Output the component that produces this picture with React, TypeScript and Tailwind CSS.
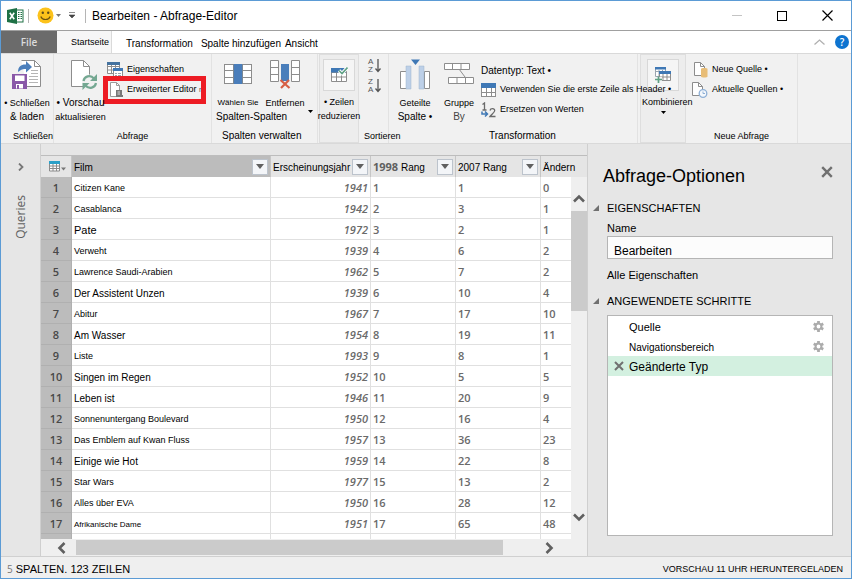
import React from "react";
import type { ReactNode } from "react";

const films: { title: string; size: string; year: number; r98: number; r07: number; diff: number }[] = [
  { title: "Citizen Kane", size: "text-[9px]", year: 1941, r98: 1, r07: 1, diff: 0 },
  { title: "Casablanca", size: "text-[9px]", year: 1942, r98: 2, r07: 3, diff: 1 },
  { title: "Pate", size: "text-[11px]", year: 1972, r98: 3, r07: 2, diff: 1 },
  { title: "Verweht", size: "text-[9px]", year: 1939, r98: 4, r07: 6, diff: 2 },
  { title: "Lawrence Saudi-Arabien", size: "text-[9px]", year: 1962, r98: 5, r07: 7, diff: 2 },
  { title: "Der Assistent Unzen", size: "text-[10px]", year: 1939, r98: 6, r07: 10, diff: 4 },
  { title: "Abitur", size: "text-[9px]", year: 1967, r98: 7, r07: 17, diff: 10 },
  { title: "Am Wasser", size: "text-[10px]", year: 1954, r98: 8, r07: 19, diff: 11 },
  { title: "Liste", size: "text-[9px]", year: 1993, r98: 9, r07: 8, diff: 1 },
  { title: "Singen im Regen", size: "text-[10px]", year: 1952, r98: 10, r07: 5, diff: 5 },
  { title: "Leben ist", size: "text-[10px]", year: 1946, r98: 11, r07: 20, diff: 9 },
  { title: "Sonnenuntergang Boulevard", size: "text-[9px]", year: 1950, r98: 12, r07: 16, diff: 4 },
  { title: "Das Emblem auf Kwan Fluss", size: "text-[9px]", year: 1957, r98: 13, r07: 36, diff: 23 },
  { title: "Einige wie Hot", size: "text-[10px]", year: 1959, r98: 14, r07: 22, diff: 8 },
  { title: "Star Wars", size: "text-[9px]", year: 1977, r98: 15, r07: 13, diff: 2 },
  { title: "Alles über EVA", size: "text-[9px]", year: 1950, r98: 16, r07: 28, diff: 12 },
  { title: "Afrikanische Dame", size: "text-[8px]", year: 1951, r98: 17, r07: 65, diff: 48 },
];

/* ---------- icons ---------- */

function ExcelIcon() {
  return (
    <svg width="17" height="16" viewBox="0 0 17 16">
      <rect x="9" y="2" width="7" height="12" fill="#fff" stroke="#1e7145" />
      <path d="M11 4.5h1.5M13.5 4.5H15M11 6.5h1.5M13.5 6.5H15M11 8.5h1.5M13.5 8.5H15M11 10.500h1.5M13.5 10.500H15" stroke="#1e7145" />
      <path d="M0 2 10 0v16L0 14z" fill="#1e7145" />
      <path d="M2.800 4.800 7.200 11.200M7.200 4.800 2.800 11.200" stroke="#fff" strokeWidth="1.600" />
    </svg>
  );
}

function SmileyIcon() {
  return (
    <svg width="17" height="17" viewBox="0 0 17 17">
      <circle cx="8.500" cy="8.500" r="8" fill="#fcc21b" />
      <circle cx="5.800" cy="5.800" r="1.200" fill="#5a4a1a" />
      <circle cx="11.200" cy="5.800" r="1.200" fill="#5a4a1a" />
      <path d="M3.800 9.500c1.500 4 7.900 4 9.400 0" fill="none" stroke="#6b5310" strokeWidth="1.200" />
    </svg>
  );
}

function Caret({ className = "" }: { className?: string }) {
  return (
    <svg className={className} width="5" height="3" viewBox="0 0 5 3">
      <path d="M0 0h5L2.500 3z" fill="currentColor" />
    </svg>
  );
}

function CloseLoadIcon() {
  return (
    <svg width="32" height="32" viewBox="0 0 32 32">
      <path d="M10.500 2.500h13l6 6v20h-14" fill="#fff" stroke="#8d8d8d" />
      <path d="M23.500 2.500v6h6" fill="none" stroke="#8d8d8d" />
      <path d="M20 12.500h7M20 15.500h7M18 18.500h9M18 21.500h9M18 24.500h9" stroke="#b5b5b5" />
      <path d="M7 14c0-6 4-8 8-7.500V3l6 6-6 5.500V11c-3-.5-5 .5-8 3z" fill="#4a7ebb" />
      <path d="M1 16h15v15H1z" fill="#8958a8" />
      <path d="M4 17.500h9.500V23H4zM5 26h7v4.500H5z" fill="#fff" />
      <path d="M6 27h2v4H6z" fill="#8958a8" />
    </svg>
  );
}

function RefreshPreviewIcon() {
  return (
    <svg width="32" height="32" viewBox="0 0 32 32">
      <path d="M6.500 2.500h12l6 6v20h-18z" fill="#fff" stroke="#8d8d8d" />
      <path d="M18.500 2.500v6h6" fill="none" stroke="#8d8d8d" />
      <circle cx="24.500" cy="24" r="7.500" fill="#f1f1f1" />
      <path d="M18.500 23c.8-5 7-6.500 10.500-2.500M31 25c-.8 5-7 6.500-10.500 2.500" fill="none" stroke="#74a892" strokeWidth="2.200" />
      <path d="M32 16v7h-7zM17.500 32v-7h7z" fill="#74a892" />
    </svg>
  );
}

function PropertiesIcon() {
  return (
    <svg className="shrink-0" width="16" height="16" viewBox="0 0 16 16">
      <path d="M.5.5h12v11H.5zM.5 4.500h12M.5 8h12M4.500 3v8.500M8.500 3v8.500" fill="#fff" stroke="#8d8d8d" />
      <path d="M0 0h13v3H0z" fill="#44729f" />
      <path d="M6.500 6.500h9v9h-9z" fill="#fff" stroke="#8d8d8d" />
      <path d="M6 6h10v3H6z" fill="#3f78b5" />
      <path d="M8 11.500h2M11 11.500h3M8 13.500h2M11 13.500h3" stroke="#9aa5b0" />
    </svg>
  );
}

function AdvancedEditorIcon() {
  return (
    <svg className="shrink-0" width="14" height="16" viewBox="0 0 14 16">
      <path d="M1.500.5h6l3 3v11h-9z" fill="#fff" stroke="#9a9a9a" />
      <path d="M7.500.5v3h3" fill="none" stroke="#9a9a9a" />
      <path d="M7 8h6v5h1v2H7z" fill="#777" />
      <path d="M8.500 10h2.500M8.500 12h2.500" stroke="#ddd" />
    </svg>
  );
}

function ChooseColumnsIcon() {
  return (
    <svg width="28" height="22" viewBox="0 0 28 22" shapeRendering="crispEdges">
      <path d="M.5 1.500h27v19H.5zM.5 7.500h27M.5 14.500h27" fill="#fff" stroke="#8d8d8d" />
      <path d="M10 1h8v20h-8z" fill="#4a7ebb" />
      <path d="M9.500 1v20M18.500 1v20" stroke="#7a8794" />
    </svg>
  );
}

function RemoveColumnsIcon() {
  return (
    <svg width="30" height="30" viewBox="0 0 30 30">
      <path d="M.5 1.500h8v21h-8zM.5 8.500h8M.5 15.500h8M21.500 1.500h8v21h-8zM21.500 8.500h8M21.500 15.500h8" fill="#fff" stroke="#8d8d8d" />
      <path d="M11 5h8v17h-8z" fill="#4a7ebb" />
      <path d="m10.500 21 9 8M19 21l-8 8" stroke="#d65f45" strokeWidth="2.200" />
    </svg>
  );
}

function KeepRowsIcon() {
  return (
    <svg width="18" height="16" viewBox="0 0 18 16">
      <path d="M1.500 1.500h15v13h-15zM1.500 5.500h15M1.500 10h15M6.500 5v9.500M11.500 5v9.500" fill="#fff" stroke="#8d8d8d" />
      <path d="M1 1h15v4.500H1z" fill="#3f78b5" />
      <path d="m9 3.500 3 3L17.500.5" fill="none" stroke="#fff" strokeWidth="3.500" />
      <path d="m9 3.500 3 3L17.500.5" fill="none" stroke="#5fa184" strokeWidth="1.600" />
    </svg>
  );
}

function SortIcon({ label }: { label: string }) {
  return (
    <span className="flex items-center gap-px text-[#555]">
      <span className="w-1.5 text-left text-[8px] leading-2 break-all">{label}</span>
      <svg width="6" height="14" viewBox="0 0 6 14">
        <path d="M3 0v12M.5 9.500 3 12.500 5.500 9.500" fill="none" stroke="currentColor" strokeWidth="1.300" />
      </svg>
    </span>
  );
}

function SplitColumnIcon() {
  return (
    <svg width="32" height="32" viewBox="0 0 32 32">
      <path d="M1.500 13.500h6v17h-6zM25.500 13.500h5v17h-5z" fill="#fff" stroke="#8d8d8d" />
      <path d="M7 8h5v23H7zM20 8h5v23h-5z" fill="#bdd0e8" stroke="#9fb4cf" strokeWidth=".5" />
      <path d="M12 1.500h9L16.500 7z" fill="#3f78b5" />
    </svg>
  );
}

function GroupByIcon() {
  return (
    <svg width="30" height="24" viewBox="0 0 30 24">
      <path d="M15 7l6 8" stroke="#8d8d8d" />
      <path d="M.5 1.500h25v6H.5zM8.500 1.500v6M17 1.500v6M4.500 15.500h25v6h-25zM13 15.500v6M21.500 15.500v6" fill="#fff" stroke="#8d8d8d" />
    </svg>
  );
}

function HeaderRowIcon() {
  return (
    <svg className="shrink-0" width="15" height="14" viewBox="0 0 15 14" shapeRendering="crispEdges">
      <path d="M.5 1.500h14v12H.5zM.5 9.500h14M5.500 5v8.500M10.500 5v8.500" fill="#fff" stroke="#8d8d8d" />
      <path d="M0 0h15v5H0z" fill="#3f78b5" />
    </svg>
  );
}

function ReplaceIcon() {
  return (
    <svg className="shrink-0" width="15" height="16" viewBox="0 0 15 16">
      <path d="M1.500 2.500 3.500 1v7M1.500 8h4" fill="none" stroke="#6a6a6a" strokeWidth="1.300" />
      <path d="M9 8.500c.5-2.500 5-2.500 4.700.3-.2 1.700-3.200 3.700-4.700 5.700h5.500" fill="none" stroke="#6a6a6a" strokeWidth="1.300" />
      <path d="M1 9.500v2.500h4.500M4 9.500 6.500 12 4 14.500" fill="none" stroke="#3f78b5" strokeWidth="1.500" />
    </svg>
  );
}

function CombineIcon() {
  return (
    <svg width="16" height="16" viewBox="0 0 16 16">
      <path d="M.5.500h10v9H.5zM.5 4.500h10M4 3v6M7.500 3v6" fill="#fff" stroke="#9aa5b0" />
      <path d="M0 0h11v2.500H0z" fill="#3f78b5" />
      <path d="M4.500 4.500h11v9h-11zM4.500 10h11M8 7v6M12 7v6" fill="#fff" stroke="#8d8d8d" />
      <path d="M4 4h12v3H4z" fill="#3f78b5" />
      <path d="M0 10h7v6H0z" fill="#f5f5f5" />
      <path d="M3.500 9.500v6.500M0 12.500h7" stroke="#5fa184" strokeWidth="1.700" />
    </svg>
  );
}

function NewSourceIcon() {
  return (
    <svg className="shrink-0" width="16" height="16" viewBox="0 0 16 16">
      <path d="M2.500.5h6l4 4v9h-10z" fill="#fff" stroke="#8d8d8d" />
      <path d="M8.500.5v4h4" fill="none" stroke="#8d8d8d" />
      <path d="M9 7c0-1.300 6.500-1.300 6.500 0v7.500c0 1.300-6.500 1.300-6.500 0z" fill="#e8bd77" />
    </svg>
  );
}

function RecentSourceIcon() {
  return (
    <svg className="shrink-0" width="16" height="16" viewBox="0 0 16 16">
      <path d="M.5.5h6l4 4v9H.5z" fill="#fff" stroke="#8d8d8d" />
      <path d="M6.500.5v4h4" fill="none" stroke="#8d8d8d" />
      <circle cx="11" cy="11.500" r="3.800" fill="#f4f8fc" stroke="#8fb0d6" strokeWidth="1.300" />
      <path d="M11 9.500v2h2" fill="none" stroke="#8fb0d6" />
    </svg>
  );
}

function TableIcon() {
  return (
    <svg width="17" height="11" viewBox="0 0 17 11">
      <path d="M.5.500h10v9.500H.5zM.5 5h10M.5 7.500h10M4 2v8M7.500 2v8" fill="#fff" stroke="#8a8a8a" />
      <path d="M0 0h11v3H0z" fill="#2ba0c8" />
      <path d="M12 6.500h5l-2.500 3z" fill="#777" />
    </svg>
  );
}

function GearIcon() {
  return (
    <svg width="11" height="11" viewBox="0 0 12 12">
      <path d="M6 0v2.500M6 9.500V12M.8 3 3 4.200M9 7.800 11.200 9M.8 9 3 7.800M9 4.200 11.200 3" stroke="#ababab" strokeWidth="3" />
      <circle cx="6" cy="6" r="3.200" fill="none" stroke="#ababab" strokeWidth="2.200" />
    </svg>
  );
}

function CrossIcon({ size }: { size: string }) {
  return (
    <svg className={size} viewBox="0 0 10 10">
      <path d="m1 1 8 8M9 1 1 9" stroke="#707070" strokeWidth="2" />
    </svg>
  );
}

function Chevron({ turn = "" }: { turn?: string }) {
  return (
    <svg className={turn} width="12" height="12" viewBox="0 0 12 12">
      <path d="m1 8.500 5-5 5 5" fill="none" stroke="#606060" strokeWidth="2.600" />
    </svg>
  );
}

/* ---------- ribbon ---------- */

function Group({ label, className = "", labelClass = "text-center text-[9px]", children }: { label?: string; className?: string; labelClass?: string; children: ReactNode }) {
  return (
    <section className={`flex shrink-0 flex-col justify-between ${className}`}>
      <div className="flex pt-1">{children}</div>
      <div className={`h-3.5 leading-3.5 whitespace-nowrap ${labelClass}`}>{label}</div>
    </section>
  );
}

function BigButton({ icon, className = "", boxed = false, children }: { icon: ReactNode; className?: string; boxed?: boolean; children: ReactNode }) {
  return (
    <button className={`flex shrink-0 flex-col items-center whitespace-nowrap ${className}`}>
      <span className={`flex size-8 items-center justify-center ${boxed ? "mb-1 border border-[#d8d8d8] bg-[#f5f5f5]" : "mb-1.5"}`}>{icon}</span>
      {children}
    </button>
  );
}

function Line({ size = "text-[9px]", children }: { size?: string; children: ReactNode }) {
  return <span className={`flex h-3.5 items-center leading-3.5 ${size}`}>{children}</span>;
}

function SmallButton({ icon, className = "", size = "text-[9px]", children }: { icon?: ReactNode; className?: string; size?: string; children: ReactNode }) {
  return (
    <button className={`relative flex h-5 items-center gap-1 whitespace-nowrap ${size} ${className}`}>
      {icon}
      <span>{children}</span>
    </button>
  );
}

function Ribbon() {
  return (
    <div className="flex h-[91px] shrink-0 overflow-hidden border-y border-[#d9d9d9] bg-[#f1f1f1]">
      <Group label="Schließen" className="w-[53px] border-r border-[#e2e2e2]" labelClass="pl-3 text-[9px]">
        <BigButton icon={<CloseLoadIcon />} className="w-full">
          <Line>•&nbsp;Schließen</Line>
          <Line size="text-[10px]">&amp; laden</Line>
        </BigButton>
      </Group>

      <Group label="Abfrage" className="w-[158px] border-r border-[#e2e2e2]">
        <BigButton icon={<RefreshPreviewIcon />} className="relative z-10 w-[53px]">
          <Line size="text-[10px]">•&nbsp;Vorschau</Line>
          <Line>aktualisieren</Line>
        </BigButton>
        <div className="flex flex-col pt-0.5">
          <SmallButton icon={<PropertiesIcon />} className="gap-0.5">Eigenschaften</SmallButton>
          <SmallButton icon={<AdvancedEditorIcon />} className="gap-0.5 pl-0.5">
            Erweiterter Editor <span className="text-[7px] text-[#555]">r</span>
            <span className="absolute -top-1 -left-1 h-7 w-[103px] border-[5px] border-[#ed1c24]" />
          </SmallButton>
        </div>
      </Group>

      <Group label="Spalten verwalten" className="w-[106px] border-r border-[#e2e2e2]" labelClass="pl-2.5 text-[10px]">
        <BigButton icon={<ChooseColumnsIcon />} className="ml-1 w-11">
          <Line size="text-[8px]">Wählen Sie</Line>
          <span className="w-full">
            <Line size="text-[10px]">Spalten-Spalten</Line>
          </span>
        </BigButton>
        <BigButton icon={<RemoveColumnsIcon />} className="ml-px w-12">
          <Line>Entfernen</Line>
          <Caret className="-mr-1 self-end" />
        </BigButton>
      </Group>

      <Group className="mx-px w-10 border border-[#dedede] bg-[#ededed]">
        <BigButton boxed icon={<KeepRowsIcon />} className="w-full">
          <Line>•&nbsp;Zeilen</Line>
          <Line>reduzieren</Line>
        </BigButton>
      </Group>

      <Group label="Sortieren" className="w-[29px] border-r border-[#e2e2e2]" labelClass="pl-1 text-[9px]">
        <div className="flex flex-col gap-1 pl-2">
          <button aria-label="Aufsteigend sortieren">
            <SortIcon label="AZ" />
          </button>
          <button aria-label="Absteigend sortieren">
            <SortIcon label="ZA" />
          </button>
        </div>
      </Group>

      <Group label="Transformation" className="relative z-10 w-[249px] border-r border-[#e2e2e2]" labelClass="pl-[100px] text-[10px]">
        <BigButton icon={<SplitColumnIcon />} className="ml-1 w-11">
          <Line>Geteilte</Line>
          <Line size="text-[10px]">Spalte&nbsp;•</Line>
        </BigButton>
        <BigButton icon={<GroupByIcon />} className="w-11">
          <Line>Gruppe</Line>
          <Line size="text-[10px]">
            <span className="text-[#444]">By</span>
          </Line>
        </BigButton>
        <div className="flex w-0 flex-col items-start pt-0.5">
          <SmallButton size="text-[10px]">Datentyp: Text •</SmallButton>
          <SmallButton icon={<HeaderRowIcon />}>Verwenden Sie die erste Zeile als Header •</SmallButton>
          <SmallButton icon={<ReplaceIcon />}>Ersetzen von Werten</SmallButton>
        </div>
      </Group>

      <Group className="ml-0.5 w-[46px] border border-[#dedede] bg-[#ededed]">
        <BigButton boxed icon={<CombineIcon />} className="w-full">
          <span className="w-full pl-px">
            <Line>Kombinieren</Line>
          </span>
          <Caret className="mt-0.5" />
        </BigButton>
      </Group>

      <Group label="Neue Abfrage" className="w-28 border-r border-[#e2e2e2]">
        <div className="flex flex-col pt-0.5 pl-1.5">
          <SmallButton icon={<NewSourceIcon />}>Neue Quelle •</SmallButton>
          <SmallButton icon={<RecentSourceIcon />}>Aktuelle Quellen •</SmallButton>
        </div>
      </Group>
    </div>
  );
}

/* ---------- data grid ---------- */

function FilterButton({ label }: { label: string }) {
  return (
    <button aria-label={label} className="flex size-4 shrink-0 items-center justify-center border border-[#bcc3cc] bg-[#f3f5f8] text-[#606060]">
      <svg width="8" height="5" viewBox="0 0 8 5">
        <path d="M0 0h8L4 5z" fill="currentColor" />
      </svg>
    </button>
  );
}

function HeadCell({ className = "border-r", filter, children }: { className?: string; filter?: string; children: ReactNode }) {
  return (
    <th className={`border-[#c6c6c6] p-0 text-left font-normal ${className}`}>
      <div className="flex h-[21px] items-center justify-between pr-0.5 pl-0.5 text-[10px] whitespace-nowrap">
        <span className="pt-0.5">{children}</span>
        {filter && <FilterButton label={filter} />}
      </div>
    </th>
  );
}

function DataGrid() {
  const num = "border-r border-b border-[#e0e0e0] p-0 pt-px pl-0.5 font-['Open_Sans',sans-serif] text-[11px] font-semibold text-[#6a6a6a]";
  const index = "border-r border-b border-[#b0b0b0] bg-[#bcbcbc] p-0 pt-px text-center font-['Open_Sans',sans-serif] text-[11px] font-semibold text-[#484848]";
  return (
    <div className="flex min-w-0 flex-1 flex-col border-x border-[#cfcfcf] pt-[11px]">
      <div className="relative min-h-0 flex-1 overflow-hidden border-t border-[#bdbdbd] bg-white">
        <table className="w-full table-fixed border-separate border-spacing-0">
          <colgroup>
            <col className="w-[31px]" />
            <col />
            <col className="w-[100px]" />
            <col className="w-[85px]" />
            <col className="w-[85px]" />
            <col className="w-[46px]" />
          </colgroup>
          <thead className="bg-[#e5e5e5]">
            <tr className="h-[21px]">
              <th className="border-r border-[#c6c6c6] p-0 pl-2">
                <TableIcon />
              </th>
              <HeadCell filter="Film filtern" className="border-r bg-[#bcbcbc]">Film</HeadCell>
              <HeadCell filter="Erscheinungsjahr filtern">Erscheinungsjahr</HeadCell>
              <HeadCell filter="1998 Rang filtern">
                <span className="font-['Open_Sans',sans-serif] text-[11px] leading-3 font-bold text-[#606060]">1998</span> Rang
              </HeadCell>
              <HeadCell filter="2007 Rang filtern">2007 Rang</HeadCell>
              <HeadCell className="">Ändern</HeadCell>
            </tr>
          </thead>
          <tbody>
            {films.map((f, i) => (
              <tr key={f.title} className="h-[21px] leading-[19px]">
                <td className={index}>{i + 1}</td>
                <td className={`border-r border-b border-[#e0e0e0] p-0 pt-[3px] pl-0.5 leading-[17px] ${f.size}`}>{f.title}</td>
                <td className={`${num} pr-0.5 text-right italic`}>{f.year}</td>
                <td className={num}>{f.r98}</td>
                <td className={num}>{f.r07}</td>
                <td className={num}>{f.diff}</td>
              </tr>
            ))}
            <tr className="h-[21px]">
              <td className={index} />
              <td className={num} />
              <td className={num} />
              <td className={num} />
              <td className={num} />
              <td className={num} />
            </tr>
          </tbody>
        </table>
        <div className="absolute top-[21px] right-0 bottom-0 flex w-4 flex-col items-center bg-[#efefef] pt-4">
          <Chevron />
          <div className="mt-1.5 h-[100px] w-full bg-[#cbcbcb]" />
          <div className="mt-auto mb-4">
            <Chevron turn="rotate-180" />
          </div>
        </div>
      </div>
      <div className="flex h-[17px] shrink-0 items-center bg-[#efefef]">
        <div className="flex w-[35px] justify-end pr-2">
          <Chevron turn="-rotate-90" />
        </div>
        <div className="h-[15px] flex-1 bg-[#cbcbcb]" />
        <div className="flex w-[84px] justify-end pr-8">
          <Chevron turn="rotate-90" />
        </div>
      </div>
    </div>
  );
}

/* ---------- options panel ---------- */

function SectionTitle({ children }: { children: ReactNode }) {
  return (
    <h3 className="-ml-3.5 flex h-4 items-center gap-2 text-[11px]">
      <svg width="6" height="6" viewBox="0 0 6 6">
        <path d="M6 0v6H0z" fill="#707070" />
      </svg>
      {children}
    </h3>
  );
}

function Step({ selected = false, gear = false, size, children }: { selected?: boolean; gear?: boolean; size: string; children: ReactNode }) {
  return (
    <li className={`flex h-5 items-center justify-between pr-2 pl-1.5 ${selected ? "bg-[#d3f0e0]" : ""}`}>
      <span className="flex items-center">
        <span className="flex w-[15px]">{selected && <CrossIcon size="size-2.5" />}</span>
        <span className={`pt-0.5 ${size}`}>{children}</span>
      </span>
      {gear && (
        <button aria-label="Schritt bearbeiten">
          <GearIcon />
        </button>
      )}
    </li>
  );
}

function OptionsPanel() {
  return (
    <aside className="flex w-[263px] shrink-0 flex-col pt-5 pr-[18px] pb-5 pl-[19px]">
      <div className="flex h-6 items-center justify-between">
        <h2 className="-ml-1 text-lg leading-6">Abfrage-Optionen</h2>
        <button aria-label="Schließen" className="pb-2">
          <CrossIcon size="size-3" />
        </button>
      </div>
      <div className="mt-3">
        <SectionTitle>EIGENSCHAFTEN</SectionTitle>
      </div>
      <label htmlFor="query-name" className="mt-1 h-4 text-[11px] leading-4">
        Name
      </label>
      <input id="query-name" defaultValue="Bearbeiten" className="h-[23px] w-full border border-[#b5b5b5] bg-[#fcfcfc] px-1.5 pt-1.5 text-xs outline-none" />
      <a href="#all" className="mt-2 h-4 text-[11px] leading-4">
        Alle Eigenschaften
      </a>
      <div className="mt-2.5">
        <SectionTitle>ANGEWENDETE SCHRITTE</SectionTitle>
      </div>
      <ul className="mt-1.5 min-h-0 flex-1 border border-[#b5b5b5] bg-white">
        <Step gear size="text-[11px]">Quelle</Step>
        <Step gear size="text-[10px]">Navigationsbereich</Step>
        <Step selected size="text-xs">Geänderte Typ</Step>
      </ul>
    </aside>
  );
}

/* ---------- window ---------- */

export default function App() {
  return (
    <div className="flex h-screen flex-col overflow-hidden border border-[#5b9bd5] bg-[#e6e6e6] font-['Liberation_Sans',Arial,sans-serif] text-black">
      <header className="flex h-[30px] shrink-0 items-center border-b border-[#a0a0a0] bg-white pl-1.5">
        <ExcelIcon />
        <span className="ml-1 h-3.5 w-px bg-[#b5b5b5]" />
        <span className="ml-2">
          <SmileyIcon />
        </span>
        <Caret className="ml-0.5 text-[#777]" />
        <svg className="ml-2" width="6" height="7" viewBox="0 0 6 7">
          <path d="M0 .5h6M0 3h6L3 6z" fill="#444" stroke="#444" strokeWidth=".6" />
        </svg>
        <span className="ml-2.5 h-3.5 w-px bg-[#b5b5b5]" />
        <h1 className="ml-1.5 text-xs">Bearbeiten - Abfrage-Editor</h1>
        <div className="ml-auto flex items-center gap-[35px] pr-[18px]">
          <button aria-label="Minimieren" className="h-px w-2.5 bg-[#c4c4c4]" />
          <button aria-label="Maximieren" className="size-2.5 border border-black" />
          <button aria-label="Fenster schließen">
            <svg width="11" height="11" viewBox="0 0 11 11">
              <path d="m.5.5 10 10M10.500.5l-10 10" stroke="#000" strokeWidth="1.200" />
            </svg>
          </button>
        </div>
      </header>

      <nav className="flex h-[22px] shrink-0 bg-white text-[10px]">
        <button className="w-14 bg-[#6b6b6b] font-['Open_Sans',sans-serif] text-[10px] font-semibold text-[#dcdcdc]">File</button>
        <button className="w-[55px] border-r border-[#dadada] bg-[#f6f6f6] pt-0.5 pl-3 text-[9px]">Startseite</button>
        <button className="ml-3.5 pt-0.5">Transformation</button>
        <button className="ml-2 pt-0.5">Spalte hinzufügen</button>
        <button className="ml-1 pt-0.5">Ansicht</button>
        <div className="ml-auto flex items-center gap-2.5 pr-0.5">
          <svg width="11" height="6" viewBox="0 0 11 6">
            <path d="m.5 5.500 5-4.500 5 4.500" fill="none" stroke="#b0b0b0" strokeWidth="1.300" />
          </svg>
          <button aria-label="Hilfe" className="flex size-3.5 items-center justify-center rounded-full bg-[#0e74d0] font-['Open_Sans',sans-serif] text-[10px] leading-none font-semibold text-white">
            ?
          </button>
        </div>
      </nav>

      <Ribbon />

      <main className="flex min-h-0 flex-1">
        <div className="flex w-[39px] shrink-0 flex-col items-center pt-[19px]">
          <svg width="6" height="8" viewBox="0 0 6 8">
            <path d="m1 .5 3.500 3.500L1 7.500" fill="none" stroke="#777" strokeWidth="1.800" />
          </svg>
          <button className="mt-6 rotate-180 font-['Open_Sans',sans-serif] text-xs text-[#606060] [writing-mode:vertical-rl]">Queries</button>
        </div>
        <DataGrid />
        <OptionsPanel />
      </main>

      <footer className="flex h-[22px] shrink-0 items-center justify-between border-t border-[#d0d0d0] bg-[#efefef] pt-1 pr-2 pl-1.5">
        <p className="text-[11px]">
          <span className="font-['Open_Sans',sans-serif] text-[10px] text-[#777]">5</span> SPALTEN. 123 ZEILEN
        </p>
        <p className="text-[9px]">VORSCHAU 11 UHR HERUNTERGELADEN</p>
      </footer>
    </div>
  );
}
